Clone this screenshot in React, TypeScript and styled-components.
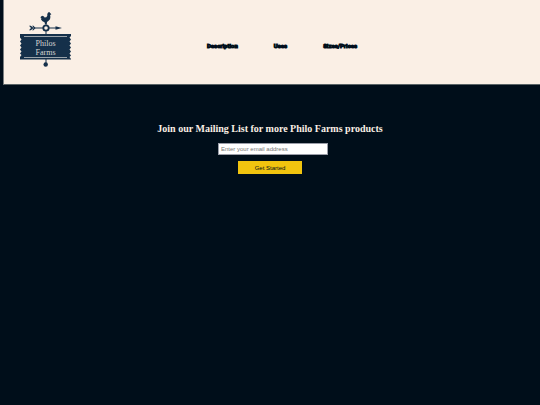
import React from "react";
import styled, { createGlobalStyle } from "styled-components";

const GlobalStyle = createGlobalStyle`
  * { box-sizing: border-box; }
  body {
    margin: 0;
    background: #000e1a;
    font-family: "Liberation Serif", "Times New Roman", serif;
  }
`;

const Header = styled.header`
  display: flex;
  align-items: center;
  height: 85px;
  margin-left: 3px;
  padding: 0 48px 0 16px;
  background: #faefe5;
  border-left: 1px solid #7b7f80;
  border-bottom: 1px solid #596366;
`;

const LogoLink = styled.a`
  display: block;
  flex: none;
  margin-bottom: 4px;
  line-height: 0;
`;

const Nav = styled.nav`
  display: flex;
  flex: 1;
  justify-content: center;
  gap: 36px;
  padding-top: 8px;
`;

const NavLink = styled.a`
  color: #000e1a;
  font: bold 6px/10px Roboto, "Liberation Sans", sans-serif;
  -webkit-text-stroke: 1px #000e1a;
  text-decoration: none;
`;

const Signup = styled.main`
  display: flex;
  flex-direction: column;
  align-items: center;
  padding-top: 38px;
`;

const Title = styled.h1`
  margin: 0;
  color: #faefe5;
  font-size: 10px;
  line-height: 12px;
`;

const Form = styled.form`
  display: flex;
  flex-direction: column;
  align-items: center;
  gap: 6px;
  margin-top: 8px;
`;

const EmailInput = styled.input`
  width: 110px;
  height: 12px;
  margin-left: 6px;
  padding: 0 2px;
  border: 1px solid #9a9da8;
  background: #fff;
  color: #222;
  font: 6px "Liberation Sans", Arial, sans-serif;
  &::placeholder { color: #757575; }
`;

const SubmitButton = styled.button`
  width: 64px;
  height: 13px;
  padding: 0;
  border: 0;
  background: #f1c40f;
  color: #000e1a;
  font: 6px "Liberation Sans", Arial, sans-serif;
`;

const Logo = () => (
  <svg width="52" height="56" viewBox="0 0 52 56" role="img" aria-label="Philos Farms">
    <g fill="#15304a">
      <path d="M20.500 6l.5-1.500 1.500-.8 1.500.8.500 1 1.800-.2 1-1.500V2l.8-1.500 1.200-.5.8 1 1.300 1.200-1.300.8.3 2-.4 2.200-1.700 1.800-1.300 1-.4 2h-1.600l-.5-1.800-2-1-1.500-1.700.5-1z" />
      <path d="M25.500 10h1v14h-1zM12 15.500h24v1H12z" />
      <path d="M35.500 14.200l6.500 1.800-6.500 1.800zM9 13.800h2l2.200 2.200-2.200 2.200H9l2-2.200z" />
      <path d="M12 13.800h1.500l2 2.200-2 2.200H12l2-2.200z" />
      <path d="M0 22h51v2l-1.500 1.500 1.500 2-1.500 2 1.500 2-1.500 2 1.500 2-1.500 2 1.500 2-1.500 2 1.500 2-1.500 1.500 1.500 2V47.500H0v-2.500l1.500-2L0 41.500l1.500-2-1.500-2 1.500-2-1.500-2 1.500-2-1.500-2 1.500-2L0 25.500z" />
      <path d="M25.500 47h1v5h-1z" />
      <circle cx="25.700" cy="52.500" r="2.200" />
    </g>
    <circle cx="26" cy="16" r="2.700" fill="#faefe5" stroke="#15304a" strokeWidth="1.800" />
    <path d="M4 24.500h43M4 45.500h43" stroke="#9ba4ab" />
    <g fill="#d7d5d2" fontFamily="Liberation Serif, serif" fontSize="8" textAnchor="middle">
      <text x="25.500" y="34">Philos</text>
      <text x="25.500" y="42.500">Farms</text>
    </g>
  </svg>
);

export default function App() {
  return (
    <>
      <GlobalStyle />
      <Header>
        <LogoLink href="#" aria-label="Philos Farms"><Logo /></LogoLink>
        <Nav>
          <NavLink href="#description">Description</NavLink>
          <NavLink href="#uses">Uses</NavLink>
          <NavLink href="#prices">Sizes/Prices</NavLink>
        </Nav>
      </Header>
      <Signup>
        <Title>Join our Mailing List for more Philo Farms products</Title>
        <Form onSubmit={(event: React.FormEvent) => event.preventDefault()}>
          <EmailInput type="email" aria-label="Email address" placeholder="Enter your email address" />
          <SubmitButton type="submit">Get Started</SubmitButton>
        </Form>
      </Signup>
    </>
  );
}
